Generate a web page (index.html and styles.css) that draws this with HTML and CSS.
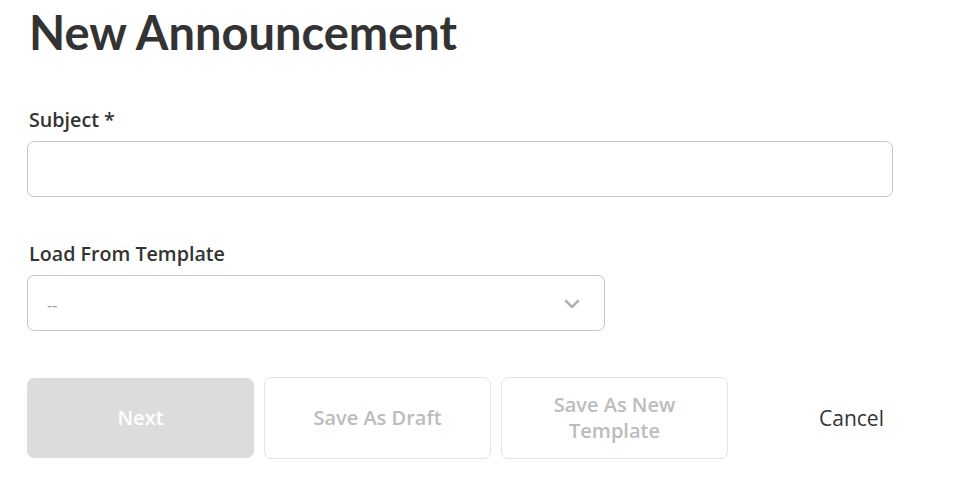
FILE: index.html
```html
<!DOCTYPE html>
<html>
<head>
<meta charset="utf-8">
<link rel="stylesheet" href="styles.css">
</head>
<body>
<div class="page">
  <h1 class="title">New Announcement</h1>
  <div class="field field-subject">
    <label class="label">Subject *</label>
    <input class="input" type="text">
  </div>
  <div class="field field-template">
    <label class="label">Load From Template</label>
    <div class="select">
      <span class="select-value">--</span>
      <svg class="chevron" width="16" height="10" viewBox="0 0 16 10"><path d="M2 2 L8 8 L14 2" fill="none" stroke="#b3b3b3" stroke-width="2.6" stroke-linecap="round" stroke-linejoin="round"/></svg>
    </div>
  </div>
  <div class="actions">
    <button class="btn btn-primary">Next</button>
    <button class="btn btn-outline">Save As Draft</button>
    <button class="btn btn-outline">Save As New<br>Template</button>
    <button class="btn btn-text">Cancel</button>
  </div>
</div>
</body>
</html>
```
FILE: styles.css
```css
html, body {
  margin: 0;
  padding: 0;
  background: #ffffff;
}
body {
  font-family: "Open Sans", Lato, sans-serif;
  color: #333333;
}
.page {
  padding: 0 0 0 27px;
}
.title {
  margin: 0;
  padding-top: 4px;
  font-family: Lato, "Open Sans", sans-serif;
  font-size: 47px;
  line-height: 56px;
  font-weight: 700;
  color: #333333;
  padding-left: 2px;
}
.field {
  display: flex;
  flex-direction: column;
}
.field-subject {
  margin-top: 48px;
}
.field-template {
  margin-top: 45px;
}
.label {
  font-size: 19.7px;
  line-height: 24px;
  font-weight: 600;
  padding-left: 2px;
  margin-bottom: 9px;
  color: #333333;
}
.input {
  box-sizing: border-box;
  width: 866px;
  height: 56px;
  border: 1.5px solid #c4c4c4;
  border-radius: 7px;
  margin: 0;
  outline: none;
  background: #fff;
}
.select {
  box-sizing: border-box;
  width: 578px;
  height: 56px;
  border: 1.5px solid #c4c4c4;
  border-radius: 7px;
  display: flex;
  align-items: center;
  justify-content: space-between;
  padding: 0 24px 0 19px;
}
.select-value {
  font-size: 16px;
  color: #999999;
  padding-top: 4px;
}
.chevron {
  display: block;
  margin-top: 2px;
}
.actions {
  display: flex;
  gap: 10px;
  margin-top: 46px;
}
.btn {
  box-sizing: border-box;
  width: 227px;
  height: 82px;
  border-radius: 7px;
  font-family: "Open Sans", Lato, sans-serif;
  font-size: 20px;
  line-height: 26px;
  font-weight: 600;
  background: #fff;
  padding: 0;
  margin: 0;
}
.btn-primary {
  background: #dcdcdc;
  border: 1px solid #dcdcdc;
  color: #ffffff;
  height: 80px;
  margin-top: 1px;
}
.btn-outline {
  border: 1.5px solid #e4e4e4;
  color: #bcbcbc;
}
.btn-text {
  border: none;
  color: #333333;
  font-weight: 400;
  font-size: 21px;
}
```
